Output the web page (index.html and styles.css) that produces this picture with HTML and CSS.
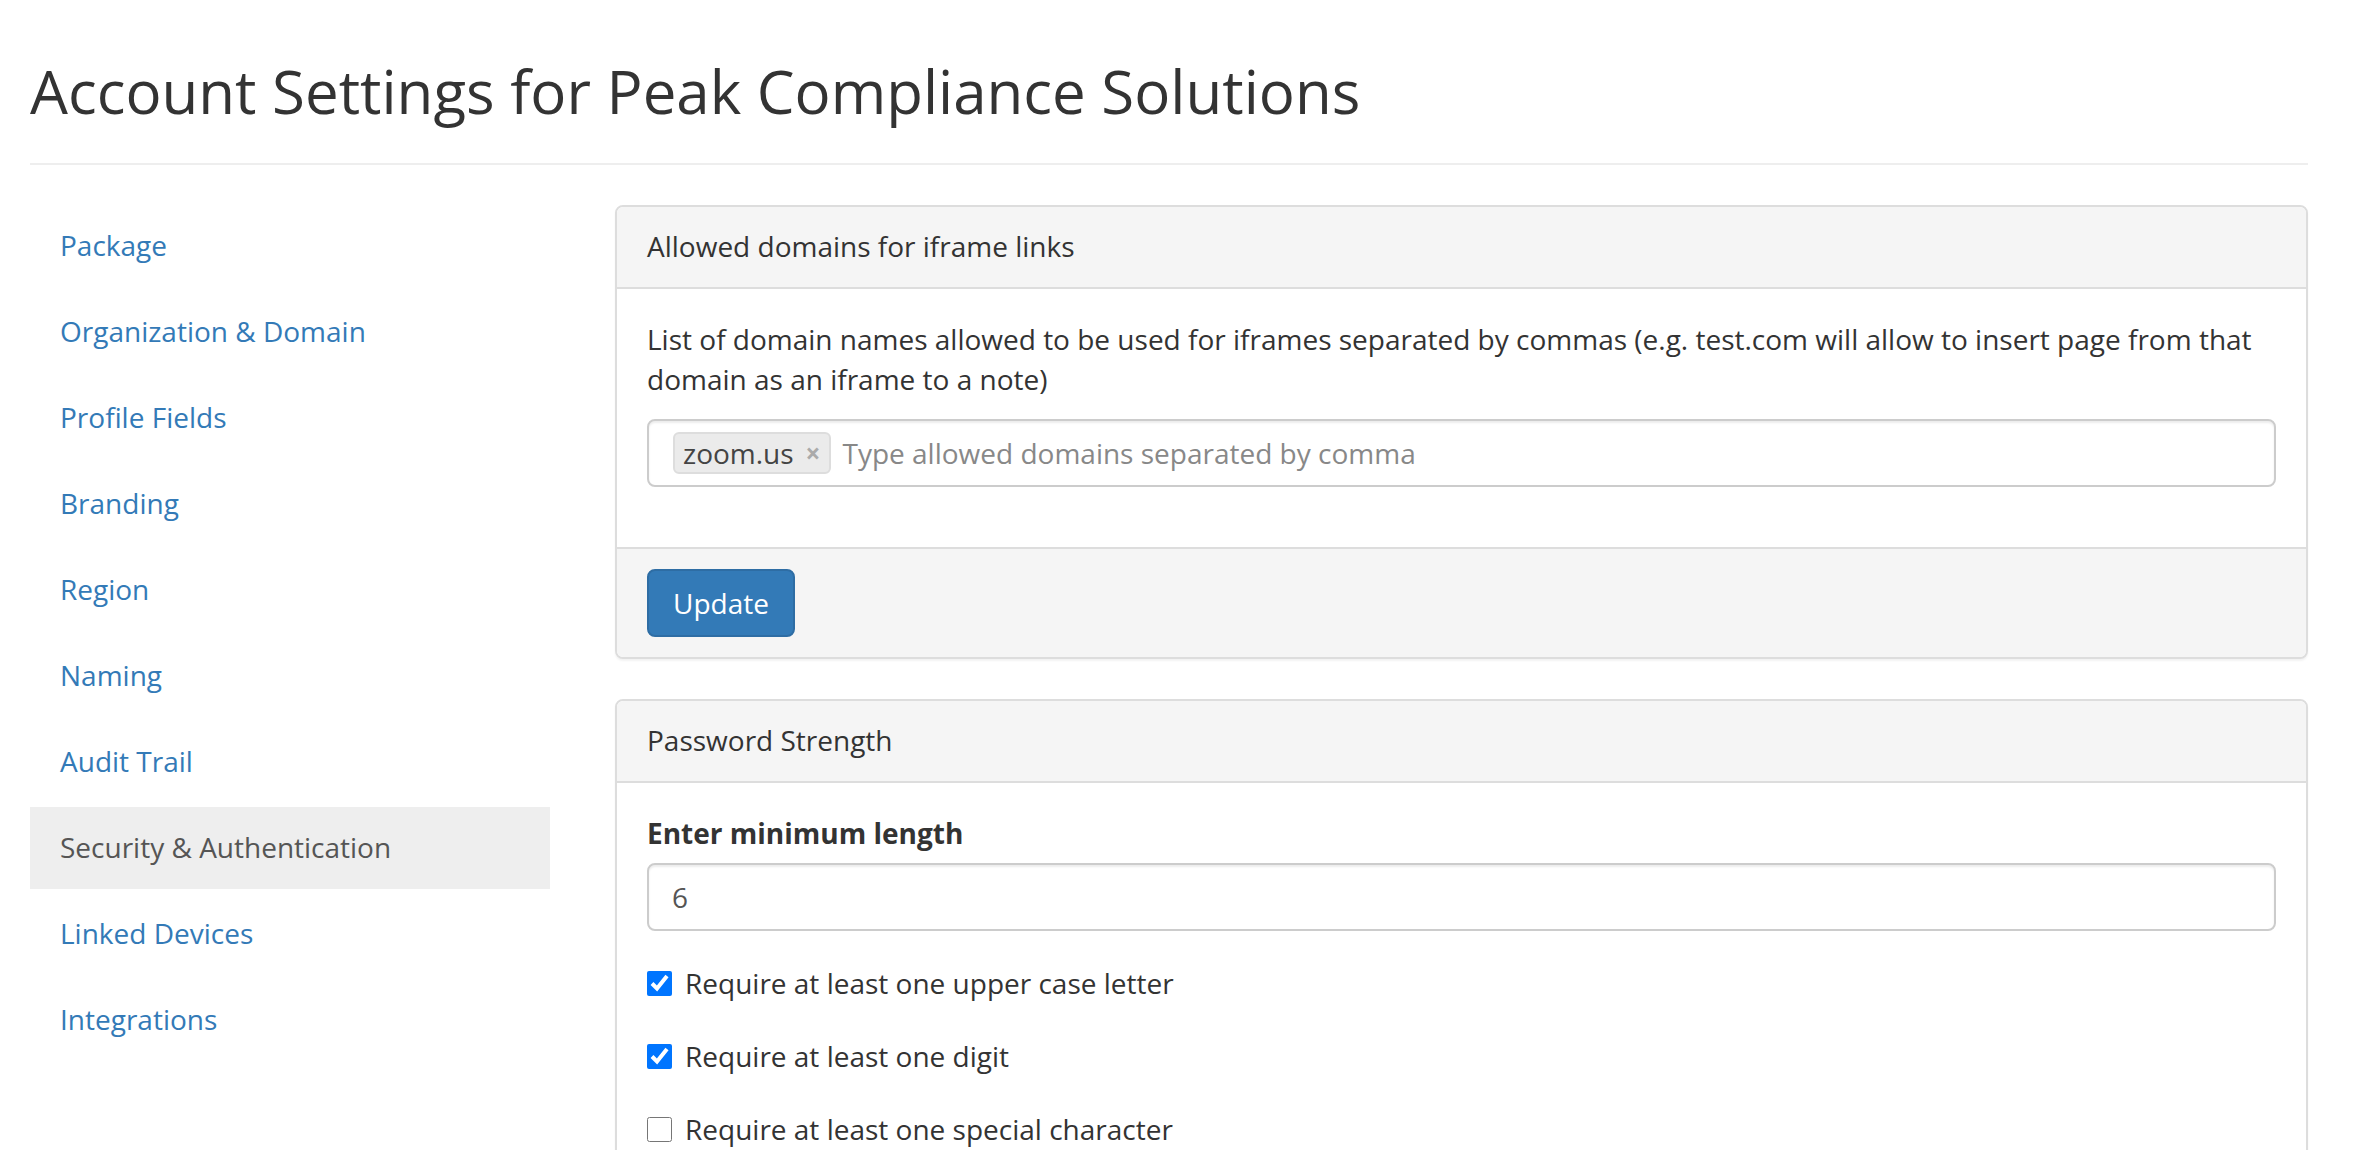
FILE: index.html
```html
<!DOCTYPE html>
<html lang="en">
<head>
<meta charset="utf-8">
<title>Account Settings</title>
<link rel="stylesheet" href="styles.css">
</head>
<body>
<div class="page">
  <header class="page-header">
    <h1 class="title">Account Settings for Peak Compliance Solutions</h1>
  </header>
  <div class="layout">
    <nav class="sidebar">
      <ul class="nav">
        <li><a href="#">Package</a></li>
        <li><a href="#">Organization &amp; Domain</a></li>
        <li><a href="#">Profile Fields</a></li>
        <li><a href="#">Branding</a></li>
        <li><a href="#">Region</a></li>
        <li><a href="#">Naming</a></li>
        <li><a href="#">Audit Trail</a></li>
        <li class="active"><a href="#">Security &amp; Authentication</a></li>
        <li><a href="#">Linked Devices</a></li>
        <li><a href="#">Integrations</a></li>
      </ul>
    </nav>
    <main class="main">
      <section class="panel">
        <div class="panel-heading">Allowed domains for iframe links</div>
        <div class="panel-body">
          <p class="help">List of domain names allowed to be used for iframes separated by commas (e.g. test.com will allow to insert page from that domain as an iframe to a note)</p>
          <div class="form-group">
            <div class="tags-input">
              <span class="tag">zoom.us<span class="tag-remove">×</span></span>
              <input class="tags-field" type="text" placeholder="Type allowed domains separated by comma">
            </div>
          </div>
        </div>
        <div class="panel-footer">
          <button class="btn" type="button">Update</button>
        </div>
      </section>

      <section class="panel">
        <div class="panel-heading">Password Strength</div>
        <div class="panel-body">
          <div class="form-group">
            <label class="label" for="minlen">Enter minimum length</label>
            <input class="field" id="minlen" type="text" value="6">
          </div>
          <div class="checks">
            <label class="check"><input type="checkbox" checked><span>Require at least one upper case letter</span></label>
            <label class="check"><input type="checkbox" checked><span>Require at least one digit</span></label>
            <label class="check"><input type="checkbox"><span>Require at least one special character</span></label>
          </div>
        </div>
      </section>
    </main>
  </div>
</div>
</body>
</html>
```

FILE: styles.css
```css
* { box-sizing: border-box; }

html, body {
  margin: 0;
  padding: 0;
  background: #fff;
}

body {
  font-family: "Open Sans", "Noto Sans", "Liberation Sans", sans-serif;
  font-size: 28px;
  line-height: 40px;
  color: #333;
}

.page {
  padding: 0 60px 0 30px;
}

.page-header {
  padding-top: 58px;
  padding-bottom: 39px;
  border-bottom: 2px solid #eee;
}

.title {
  margin: 0;
  font-size: 60px;
  line-height: 66px;
  font-weight: 400;
  color: #333;
}

.layout {
  display: flex;
  gap: 65px;
  margin-top: 40px;
  align-items: flex-start;
}

.sidebar {
  width: 520px;
  flex: none;
}

.nav {
  list-style: none;
  margin: 0;
  padding: 0;
  display: flex;
  flex-direction: column;
  gap: 4px;
}

.nav a {
  display: block;
  padding: 20px 30px 22px;
  line-height: 40px;
  color: #337ab7;
  text-decoration: none;
}

.nav .active a {
  background: #eee;
  color: #555;
}

.main {
  flex: 1;
  min-width: 0;
}

.panel {
  border: 2px solid #ddd;
  border-radius: 8px;
  margin-bottom: 40px;
  background: #fff;
  box-shadow: 0 2px 2px rgba(0, 0, 0, 0.05);
  overflow: hidden;
}

.panel-heading {
  background: #f5f5f5;
  padding: 19px 30px 21px;
  border-bottom: 2px solid #ddd;
  color: #333;
}

.panel-body {
  padding: 30px;
}

.panel-footer {
  background: #f5f5f5;
  border-top: 2px solid #ddd;
  padding: 20px 30px;
}

.help {
  margin: 0 0 20px;
}

.form-group {
  margin-bottom: 30px;
}

.tags-input {
  display: flex;
  align-items: center;
  height: 68px;
  border: 2px solid #ccc;
  border-radius: 8px;
  padding: 0 24px;
  box-shadow: inset 0 2px 2px rgba(0, 0, 0, 0.075);
  background: #fff;
}

.tag {
  display: inline-flex;
  align-items: center;
  height: 42px;
  padding: 0 9px 0 8px;
  margin-right: 11px;
  background: #ebebeb;
  border: 2px solid #ddd;
  border-radius: 6px;
  color: #444;
  font-size: 28px;
  line-height: 38px;
}

.tag-remove {
  margin-left: 12px;
  color: #aaa;
  font-weight: 700;
  font-size: 26px;
}

.tags-field {
  flex: 1;
  min-width: 0;
  border: none;
  outline: none;
  padding: 0;
  font-family: inherit;
  font-size: 28px;
  color: #555;
  background: transparent;
}

.tags-field::placeholder {
  color: #888;
}

.btn {
  display: inline-block;
  height: 68px;
  padding: 12px 24px;
  font-family: inherit;
  font-size: 28px;
  line-height: 40px;
  color: #fff;
  background: #337ab7;
  border: 2px solid #2e6da4;
  border-radius: 8px;
  cursor: pointer;
}

.label {
  display: block;
  font-weight: 700;
  margin-bottom: 10px;
}

.field {
  display: block;
  width: 100%;
  height: 68px;
  border: 2px solid #ccc;
  border-radius: 8px;
  padding: 0 23px;
  font-family: inherit;
  font-size: 28px;
  color: #555;
  box-shadow: inset 0 2px 2px rgba(0, 0, 0, 0.075);
  background: #fff;
}

.checks {
  display: flex;
  flex-direction: column;
  gap: 33px;
  margin-top: 32px;
}

.check {
  display: flex;
  align-items: center;
  gap: 13px;
  line-height: 40px;
}

.check input {
  width: 25px;
  height: 25px;
  margin: 0;
  flex: none;
}
```
